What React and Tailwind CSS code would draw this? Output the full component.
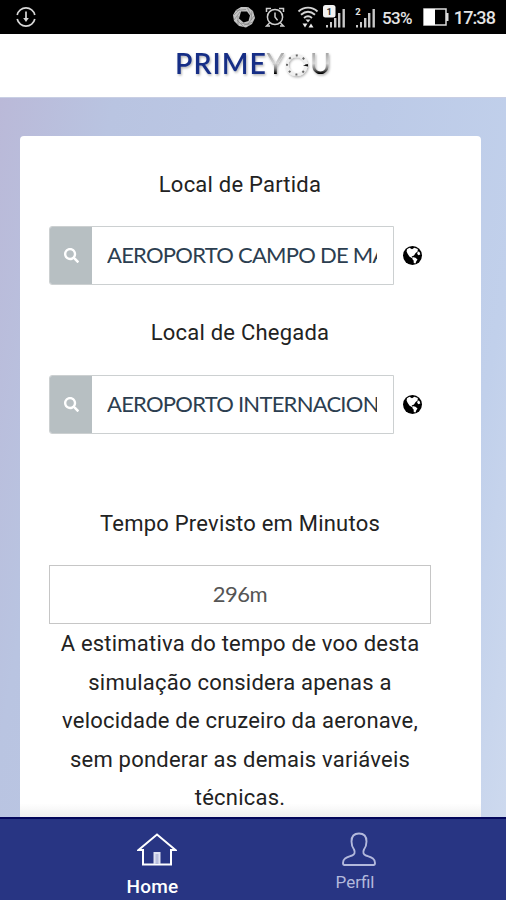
import React from "react";
import { FaSearch } from "react-icons/fa";

function SignalBars({ label, boxed }) {
  return (
    <svg width="23" height="28" viewBox="0 0 23 28">
      <g fill="#c9c9c9">
        <rect x="3" y="22" width="2" height="2.5" />
        <rect x="7" y="19" width="2" height="5.5" />
        <rect x="11" y="15" width="2.4" height="9.5" />
        <rect x="15" y="10" width="2.4" height="14.5" />
        <rect x="19.5" y="6" width="2.4" height="18.5" />
      </g>
      {boxed && <rect x="0" y="2" width="12.5" height="12.5" rx="2.5" fill="#f2f2f2" />}
      <text
        x={boxed ? 6.2 : 5}
        y="11.5"
        textAnchor="middle"
        fontSize="9.5"
        fontWeight="700"
        fontFamily="Roboto, sans-serif"
        fill={boxed ? "#333" : "#e5e5e5"}
      >
        {label}
      </text>
    </svg>
  );
}

function StatusBar() {
  return (
    <div className="flex h-[34px] shrink-0 items-center bg-black pl-4 pr-[11px] text-[#e4e4e4]">
      <svg width="20" height="20" viewBox="0 0 20 20" fill="none" stroke="#d8d8d8" strokeWidth="1.7">
        <path d="M1.2 8A9 9 0 0 1 18.8 8M1.2 12a9 9 0 0 0 17.6 0" />
        <path d="M10 4.5V12" />
        <path d="M7.2 11h5.6L10 15z" fill="#d8d8d8" stroke="none" />
      </svg>
      <div className="ml-auto flex items-center">
        <svg width="24" height="24" viewBox="0 0 24 24" fill="none">
          <path d="M9 2h7l5 4 2 7-3 6-6 3.5-7-1.500-5-5-1-6 3-5z" fill="#c4c4c4" />
          <path d="M9 6.5h6l3 4-1.500 5.500-5 1.500-4.500-4z" fill="#000" />
          <path d="M4 5.5l10-1M2 10l6-6M2 15l6-8M6 20L6 11M12 22l-7-7M18 20l-9-2M21 17l-9 3M22 11l-6 8M20 6l-1 9M15 2l4 8" stroke="#777" strokeWidth="0.6" />
        </svg>
        <svg className="ml-[9px]" width="20" height="22" viewBox="0 0 20 22" fill="none" stroke="#cfcfcf" strokeWidth="1.5">
          <circle cx="10" cy="11" r="7.6" />
          <path d="M10 6.5V11l2.6 3.4M1.5 6V2.5H6M18.5 6V2.5H14M4.5 17L1.5 20H5M15.5 17l3 3H15" />
        </svg>
        <svg className="ml-[12px]" width="22" height="24" viewBox="0 0 22 24" fill="none" stroke="#d4d4d4" strokeWidth="1.9">
          <path d="M1.5 6.5C7 1.3 15 1.3 20.5 6.5M4 9.8C8.5 6 13.5 6 18 9.8M7 13c2.4-2 5.6-2 8 0" />
          <path d="M8.5 14.500h5L11 17.500z" fill="#dcdcdc" stroke="none" />
          <path d="M5.5 18.500h5L8 22.500zM16.500 22.500h-5l2.500-4z" fill="#eee" stroke="none" />
        </svg>
        <div className="ml-[4px] flex">
          <SignalBars label="1" boxed />
        </div>
        <div className="ml-[7px] flex">
          <SignalBars label="2" />
        </div>
        <span className="ml-[6px] mt-[2px] font-[Roboto] text-[17px] font-medium leading-none tracking-[-0.7px]">53%</span>
        <svg className="ml-[11px]" width="26" height="18" viewBox="0 0 26 18" fill="none">
          <rect x="1" y="1" width="22" height="16" stroke="#dcdcdc" strokeWidth="1.5" />
          <rect x="1" y="1" width="11" height="16" fill="#fff" />
          <rect x="23" y="5" width="2.5" height="8" fill="#dcdcdc" />
        </svg>
        <span className="ml-[5px] mt-[2px] font-[Roboto] text-[18px] font-medium leading-none tracking-[-0.9px]">17:38</span>
      </div>
    </div>
  );
}

function Logo() {
  return (
    <svg width="170" height="40" viewBox="168 46 170 40">
      <defs>
        <linearGradient id="silver" gradientUnits="userSpaceOnUse" x1="0" y1="53" x2="0" y2="76">
          <stop offset="0" stopColor="#a5a5a5" />
          <stop offset="0.45" stopColor="#d6d6d6" />
          <stop offset="0.7" stopColor="#777" />
          <stop offset="0.9" stopColor="#000" />
        </linearGradient>
        <filter id="soft" x="-10%" y="-20%" width="120%" height="150%">
          <feDropShadow dx="1" dy="1.5" stdDeviation="1" floodColor="#000" floodOpacity="0.3" />
        </filter>
      </defs>
      <g filter="url(#soft)" fontFamily="Lato, sans-serif">
        <text x="175" y="74" fontSize="28.5" fontWeight="600" fill="#182f86" textLength="91">PRIME</text>
        <text x="266.5" y="74" fontSize="28.5" fill="url(#silver)">Y</text>
        <text x="310" y="74" fontSize="28.5" fill="url(#silver)">U</text>
        <circle cx="296.5" cy="65" r="9.5" fill="none" stroke="#f0f0f0" strokeWidth="3" />
        <circle cx="296.5" cy="65" r="9.5" fill="none" stroke="#666" strokeWidth="2" strokeDasharray="2 5.46" strokeDashoffset="1" />
        <path d="M303 65.5l5-1.500v2.500z" fill="#111" />
      </g>
    </svg>
  );
}

function GlobeIcon() {
  return (
    <svg className="mb-px ml-[9px] shrink-0" width="19" height="19" viewBox="0 0 19 19">
      <circle cx="9.5" cy="9.5" r="9.5" fill="#000" />
      <path
        d="M4 3.2L6.500 1.800l2.500 1.400 2.400-1.400 3.400 1.200-.2 2.400-2 1.600-1.600 2.400-2.300 1 .6 1.800-2.700-1.400-2-3-1-2.400z"
        fill="#fff"
      />
      <path d="M9.500 11l3 .8 2 1.700-1.200 1.700-.8 2.200-1.700-.4-.2-2.400-1.300-1.600z" fill="#fff" />
      <path d="M15 5.500l1.500.4.8 2.600-2 .7-1.200-1.700z" fill="#fff" />
    </svg>
  );
}

function Label({ children }) {
  return <div className="text-center text-[22px] leading-[38px] tracking-[0.22px] text-[#222]">{children}</div>;
}

function AirportField({ value }) {
  return (
    <div className="flex items-center">
      <div className="flex h-[59px] w-[345px] overflow-hidden rounded-l-[3px] border border-[#ccd0d1]">
        <div className="flex w-[42px] shrink-0 items-center justify-center bg-[#b7bfc2]">
          <FaSearch size={15} className="ml-px text-white" />
        </div>
        <input
          readOnly
          defaultValue={value}
          className="ml-[15px] mr-[16px] min-w-0 flex-1 bg-transparent pb-[2px] font-[Lato] text-[22px] tracking-[-0.75px] text-[#2c3e50] outline-none"
        />
      </div>
      <GlobeIcon />
    </div>
  );
}

export default function App() {
  return (
    <div className="flex h-[900px] w-[506px] flex-col overflow-hidden bg-white font-[Roboto,sans-serif]">
      <StatusBar />
      <header className="flex h-[63px] shrink-0 items-center justify-center bg-white">
        <Logo />
      </header>

      <main className="min-h-0 flex-1 overflow-hidden border-t border-[#c9cfe4] bg-[linear-gradient(100deg,#bab9d8_0%,#b9c4e1_18%,#bccae7_60%,#c1d0eb_85%,#cdd9ee_100%)] px-5 pt-[38px]">
        <div className="h-[681px] w-[461px] rounded-t-[4px] bg-[linear-gradient(to_bottom,#fff_98%,#f0f0f0_100%)] pl-[29px] pr-[50px] pt-[30px]">
          <Label>Local de Partida</Label>
          <div className="mt-[22px]">
            <AirportField value="AEROPORTO CAMPO DE MARTE" />
          </div>
          <div className="mt-[29px]">
            <Label>Local de Chegada</Label>
          </div>
          <div className="mt-[23px]">
            <AirportField value="AEROPORTO INTERNACIONAL" />
          </div>
          <div className="mt-[71px]">
            <Label>Tempo Previsto em Minutos</Label>
          </div>
          <div className="mt-[22px] h-[59px] border border-[#c6c6c6] text-center font-[Lato] text-[22px] leading-[56px] tracking-[-0.5px] text-[#555]">
            296m
          </div>
          <p className="mt-px text-center text-[22px] leading-[38.5px] tracking-[0.22px] text-[#222]">
            A estimativa do tempo de voo desta
            <br />
            simulação considera apenas a
            <br />
            velocidade de cruzeiro da aeronave,
            <br />
            sem ponderar as demais variáveis
            <br />
            técnicas.
          </p>
        </div>
      </main>

      <nav className="flex h-[83px] shrink-0 border-t-2 border-[#04085c] bg-[#283583]">
        <div className="flex w-[305px] flex-col items-center pt-[14px] text-white">
          <svg className="ml-2" width="40" height="34" viewBox="0 0 40 34" fill="none" stroke="currentColor" strokeWidth="2">
            <path d="M1.5 17L20 1.500 38.500 17H34V31.500H6V17z" />
            <path d="M17.500 31V20h5v11" fill="#b9bfdd" stroke="#dfe2f2" />
          </svg>
          <span className="mt-[10px] text-[19px] font-medium leading-none tracking-[0.2px]">Home</span>
        </div>
        <div className="flex w-[100px] flex-col items-center pt-[13px] text-[#b3b9dc]">
          <svg className="ml-2" width="34" height="34" viewBox="0 0 34 34" fill="none" stroke="currentColor" strokeWidth="1.9">
            <path d="M17 1.500c-5 0-7.500 3-7.500 8 0 4 1 6 2.500 8 1.500 3 .5 5-2 6-5 1.800-9 2.500-9 7.500 0 1.500.5 2 1.500 2h29c1 0 1.500-.5 1.500-2 0-5-4-5.700-9-7.500-2.500-1-3.500-3-2-6 1.500-2 2.500-4 2.500-8 0-5-2.500-8-7.500-8z" />
          </svg>
          <span className="mt-[8px] text-[17px] leading-none">Perfil</span>
        </div>
      </nav>
    </div>
  );
}
